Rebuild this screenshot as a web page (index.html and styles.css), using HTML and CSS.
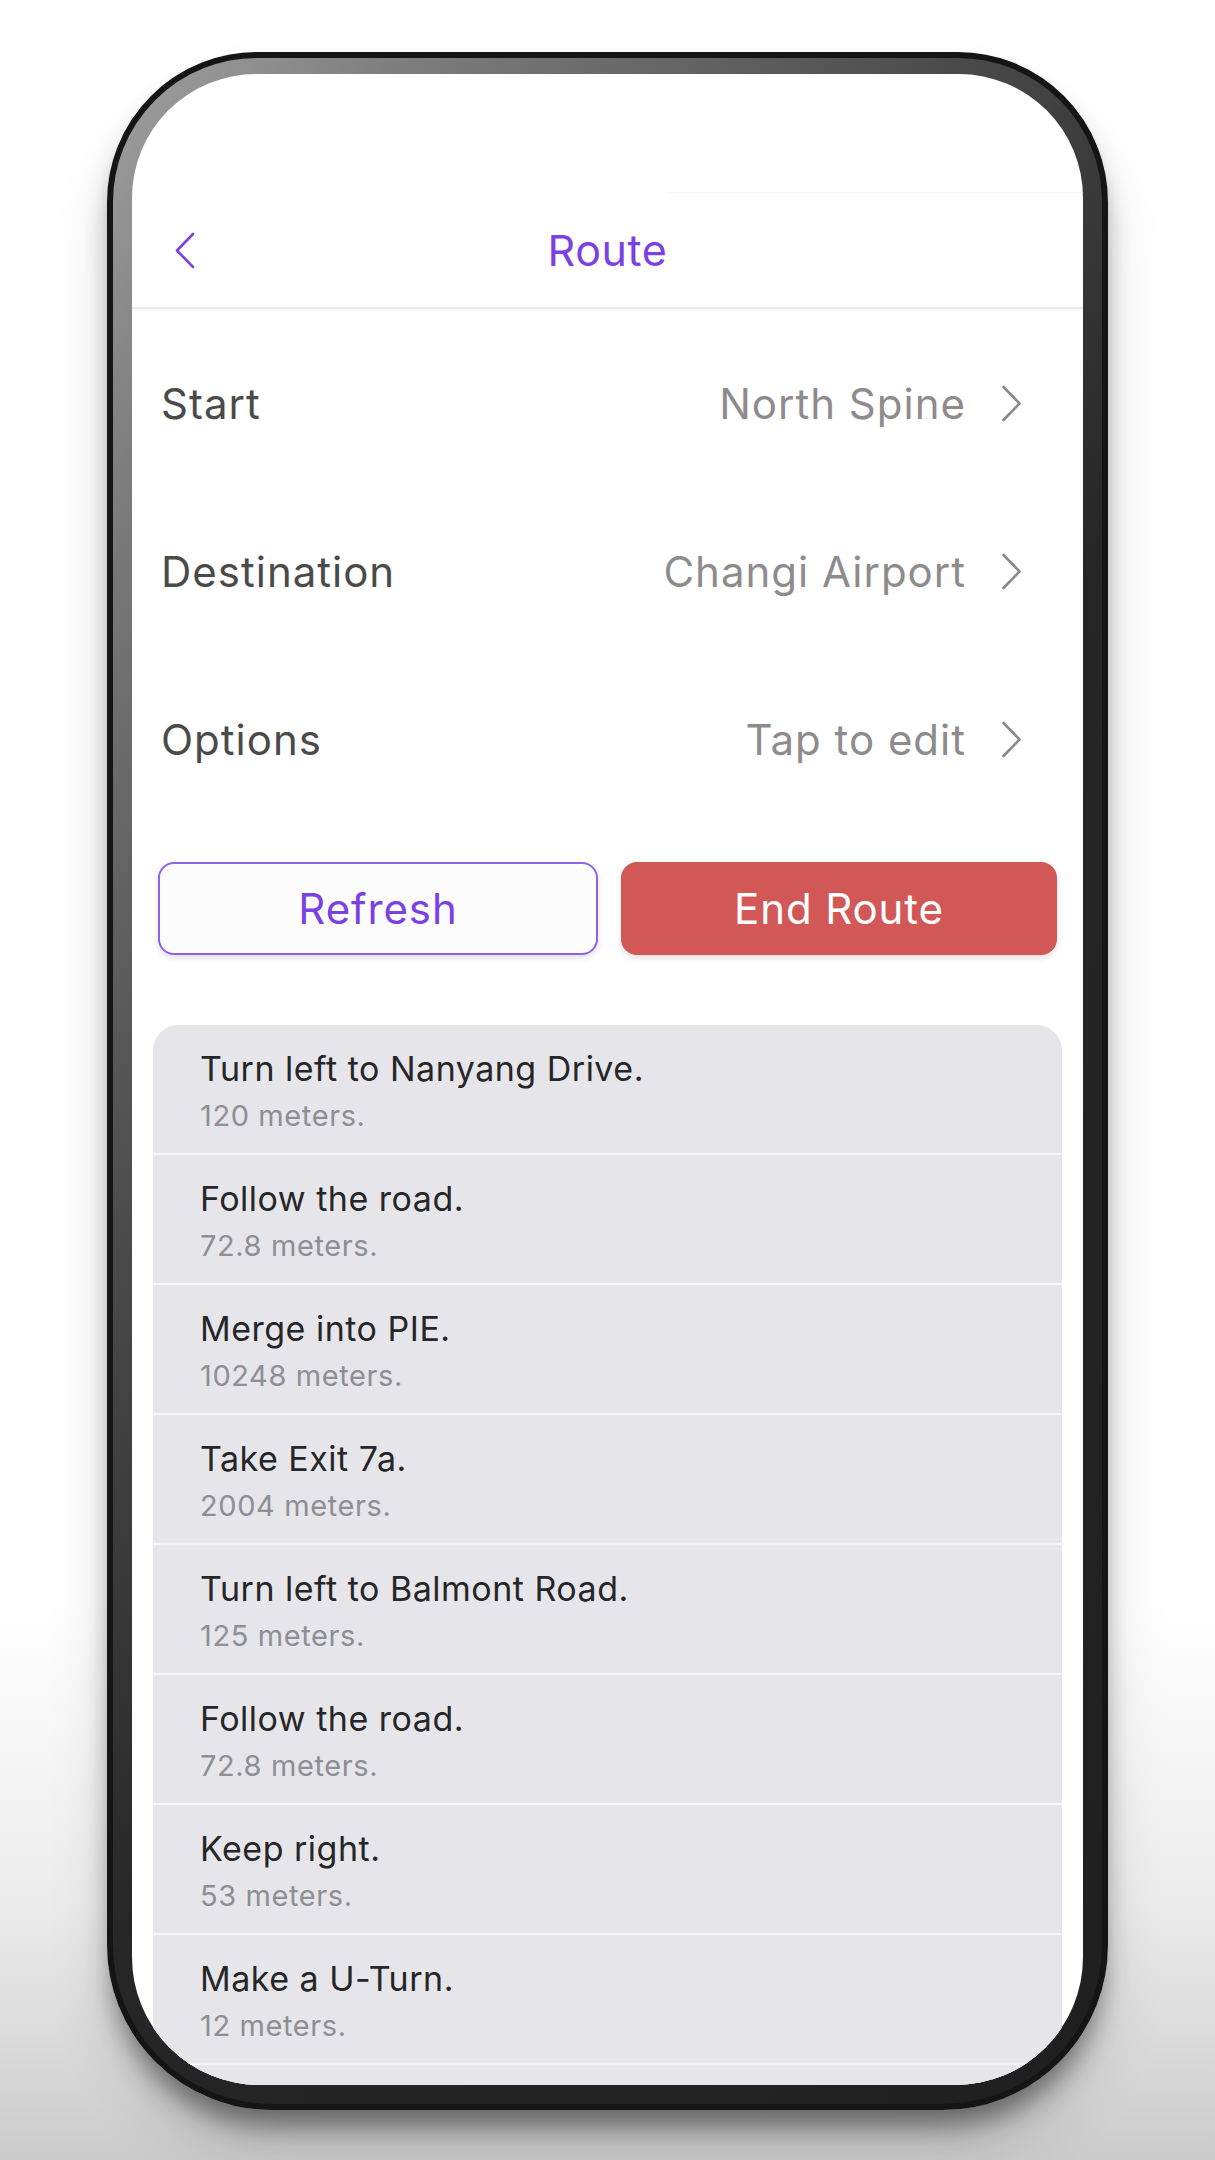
FILE: index.html
```html
<!DOCTYPE html>
<html lang="en">
<head>
<meta charset="utf-8">
<title>Route</title>
<link rel="stylesheet" href="styles.css">
</head>
<body>
<div class="phone">
  <div class="screen">
    <div class="status"><div class="status-line"></div></div>
    <header class="nav">
      <svg class="back" width="22" height="37" viewBox="0 0 22 37" aria-hidden="true"><path d="M19 2 L3 18.5 L19 35" fill="none" stroke="#7b41e3" stroke-width="2.6" stroke-linecap="round" stroke-linejoin="round"/></svg>
      <h1 class="title">Route</h1>
    </header>
    <section class="settings">
      <div class="setting">
        <span class="label">Start</span>
        <span class="value">North Spine</span>
        <svg class="chev" width="21" height="37" viewBox="0 0 21 37" aria-hidden="true"><path d="M2.5 2 L18.5 18.5 L2.5 35" fill="none" stroke="#8a8a8c" stroke-width="2.6" stroke-linecap="round" stroke-linejoin="round"/></svg>
      </div>
      <div class="setting">
        <span class="label">Destination</span>
        <span class="value">Changi Airport</span>
        <svg class="chev" width="21" height="37" viewBox="0 0 21 37" aria-hidden="true"><path d="M2.5 2 L18.5 18.5 L2.5 35" fill="none" stroke="#8a8a8c" stroke-width="2.6" stroke-linecap="round" stroke-linejoin="round"/></svg>
      </div>
      <div class="setting">
        <span class="label">Options</span>
        <span class="value">Tap to edit</span>
        <svg class="chev" width="21" height="37" viewBox="0 0 21 37" aria-hidden="true"><path d="M2.5 2 L18.5 18.5 L2.5 35" fill="none" stroke="#8a8a8c" stroke-width="2.6" stroke-linecap="round" stroke-linejoin="round"/></svg>
      </div>
    </section>
    <div class="actions">
      <button class="btn btn-refresh">Refresh</button>
      <button class="btn btn-end">End Route</button>
    </div>
    <ul class="steps">
      <li class="step"><span class="step-title">Turn left to Nanyang Drive.</span><span class="step-dist">120 meters.</span></li>
      <li class="step"><span class="step-title">Follow the road.</span><span class="step-dist">72.8 meters.</span></li>
      <li class="step"><span class="step-title">Merge into PIE.</span><span class="step-dist">10248 meters.</span></li>
      <li class="step"><span class="step-title">Take Exit 7a.</span><span class="step-dist">2004 meters.</span></li>
      <li class="step"><span class="step-title">Turn left to Balmont Road.</span><span class="step-dist">125 meters.</span></li>
      <li class="step"><span class="step-title">Follow the road.</span><span class="step-dist">72.8 meters.</span></li>
      <li class="step"><span class="step-title">Keep right.</span><span class="step-dist">53 meters.</span></li>
      <li class="step"><span class="step-title">Make a U-Turn.</span><span class="step-dist">12 meters.</span></li>
      <li class="step step-empty"></li>
    </ul>
  </div>
</div>
</body>
</html>
```
FILE: styles.css
```css
* { box-sizing: border-box; }

html, body {
  margin: 0;
  padding: 0;
}

body {
  width: 1215px;
  height: 2160px;
  overflow: hidden;
  font-family: Inter, "Noto Sans", "Liberation Sans", sans-serif;
  background: linear-gradient(to bottom, #ffffff 0px, #ffffff 1600px, #ececec 1900px, #d8d8d8 2060px, #cbcbcb 2160px);
  padding-top: 52px;
}

.phone {
  width: 1001px;
  height: 2058px;
  margin-left: 107px;
  border-radius: 150px 150px 165px 165px;
  border: 6px solid #151515;
  padding: 16px 19px 19px 19px;
  background: linear-gradient(125deg, #a0a0a0 0%, #7e7e7e 12%, #4a4a4a 35%, #262626 55%, #1f1f1f 100%);
  box-shadow: 0 22px 26px -6px rgba(0, 0, 0, 0.45), 0 40px 60px rgba(0, 0, 0, 0.12);
}

.screen {
  width: 100%;
  height: 100%;
  background: #ffffff;
  border-radius: 124px 124px 128px 128px;
  overflow: hidden;
  display: flex;
  flex-direction: column;
}

.status {
  height: 119px;
  flex: none;
  display: flex;
  justify-content: flex-end;
  align-items: flex-end;
}

.status-line {
  width: 417px;
  height: 1px;
  background: #f5f5f5;
}

.nav {
  flex: none;
  height: 116px;
  display: flex;
  align-items: center;
  justify-content: center;
  position: relative;
  border-bottom: 2px solid #e8e8ea;
  box-shadow: 0 2px 3px rgba(0, 0, 0, 0.04);
}

.back {
  position: absolute;
  left: 42px;
  top: 39px;
}

.title {
  margin: 0;
  font-size: 43px;
  font-weight: 400;
  color: #7b41e3;
  letter-spacing: 0.6px;
}

.settings {
  flex: none;
  padding-top: 10px;
}

.setting {
  height: 168px;
  display: flex;
  align-items: center;
  padding: 0 61px 0 29px;
  font-size: 42px;
}

.label {
  color: #4a4a4a;
  flex: 1;
  letter-spacing: 1px;
}

.value {
  color: #8f8b8d;
  letter-spacing: 1px;
}

.chev {
  margin-left: 35px;
  flex: none;
}

.actions {
  flex: none;
  display: flex;
  gap: 23px;
  padding: 0 26px;
  margin-top: 39px;
}

.btn {
  flex: 1;
  height: 93px;
  border-radius: 16px;
  font-family: Inter, "Noto Sans", "Liberation Sans", sans-serif;
  font-size: 42px;
  font-weight: 400;
  letter-spacing: 0.9px;
  cursor: pointer;
  box-shadow: 0 3px 6px rgba(0, 0, 0, 0.12);
}

.btn-refresh {
  background: #fcfcfd;
  color: #7b41e3;
  border: 2px solid #8e63e9;
}

.btn-end {
  background: #d25757;
  color: #ffffff;
  border: none;
}

.steps {
  flex: none;
  list-style: none;
  margin: 70px 21px 0 21px;
  padding: 0;
  background: #e5e5ea;
  border-radius: 26px 26px 0 0;
  overflow: hidden;
}

.step {
  height: 130px;
  padding: 23px 47px 0 47px;
  border-bottom: 2px solid #f7f7f9;
  display: flex;
  flex-direction: column;
  background: #e5e5ea;
}

.step-title {
  font-size: 34px;
  line-height: 42px;
  letter-spacing: 0.5px;
  color: #262628;
}

.step-dist {
  margin-top: 8px;
  font-size: 29px;
  line-height: 36px;
  letter-spacing: 0.6px;
  color: #8e8e93;
}

.step-empty {
  height: 60px;
  border-bottom: none;
}
```
